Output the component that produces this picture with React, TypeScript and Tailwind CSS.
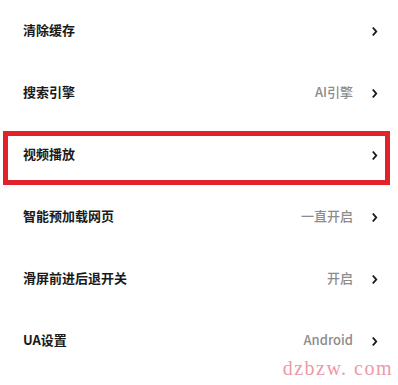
const rows: { label: string; value?: string; highlight?: boolean }[] = [
  { label: '清除缓存' },
  { label: '搜索引擎', value: 'AI引擎' },
  { label: '视频播放', highlight: true },
  { label: '智能预加载网页', value: '一直开启' },
  { label: '滑屏前进后退开关', value: '开启' },
  { label: 'UA设置', value: 'Android' },
];

function Chevron() {
  return (
    <svg width="7" height="11" viewBox="0 0 7 11" className="ml-[18px] mr-[20px]">
      <path d="M1.8 1.5 L5.2 5.5 L1.8 9.5" fill="none" stroke="#1a1a1a" strokeWidth="1.9" />
    </svg>
  );
}

export default function App() {
  return (
    <div className="relative h-[385px] w-[398px] overflow-hidden bg-white font-['Noto_Sans_CJK_SC','Noto_Sans',sans-serif]">
      {rows.map((r) => (
        <div key={r.label} className="relative flex h-[62px] items-center pl-[23px]">
          <span className="-mt-[2px] flex-1 text-[13px] font-bold text-[#1a1a1a]">{r.label}</span>
          {r.value && <span className="-mt-[2px] text-[13px] font-medium text-[#8c8c8c]">{r.value}</span>}
          <Chevron />
          {r.highlight && (
            <div className="pointer-events-none absolute top-[7px] bottom-[1px] left-[3px] right-[8px] border-[5px] border-[#e1222b]" />
          )}
        </div>
      ))}
      <div className="absolute right-[5px] bottom-[2px] font-['Liberation_Serif',serif] text-[20px] tracking-[1.5px] text-[#eb9aa6]">
        dzbzw. com
      </div>
    </div>
  );
}
